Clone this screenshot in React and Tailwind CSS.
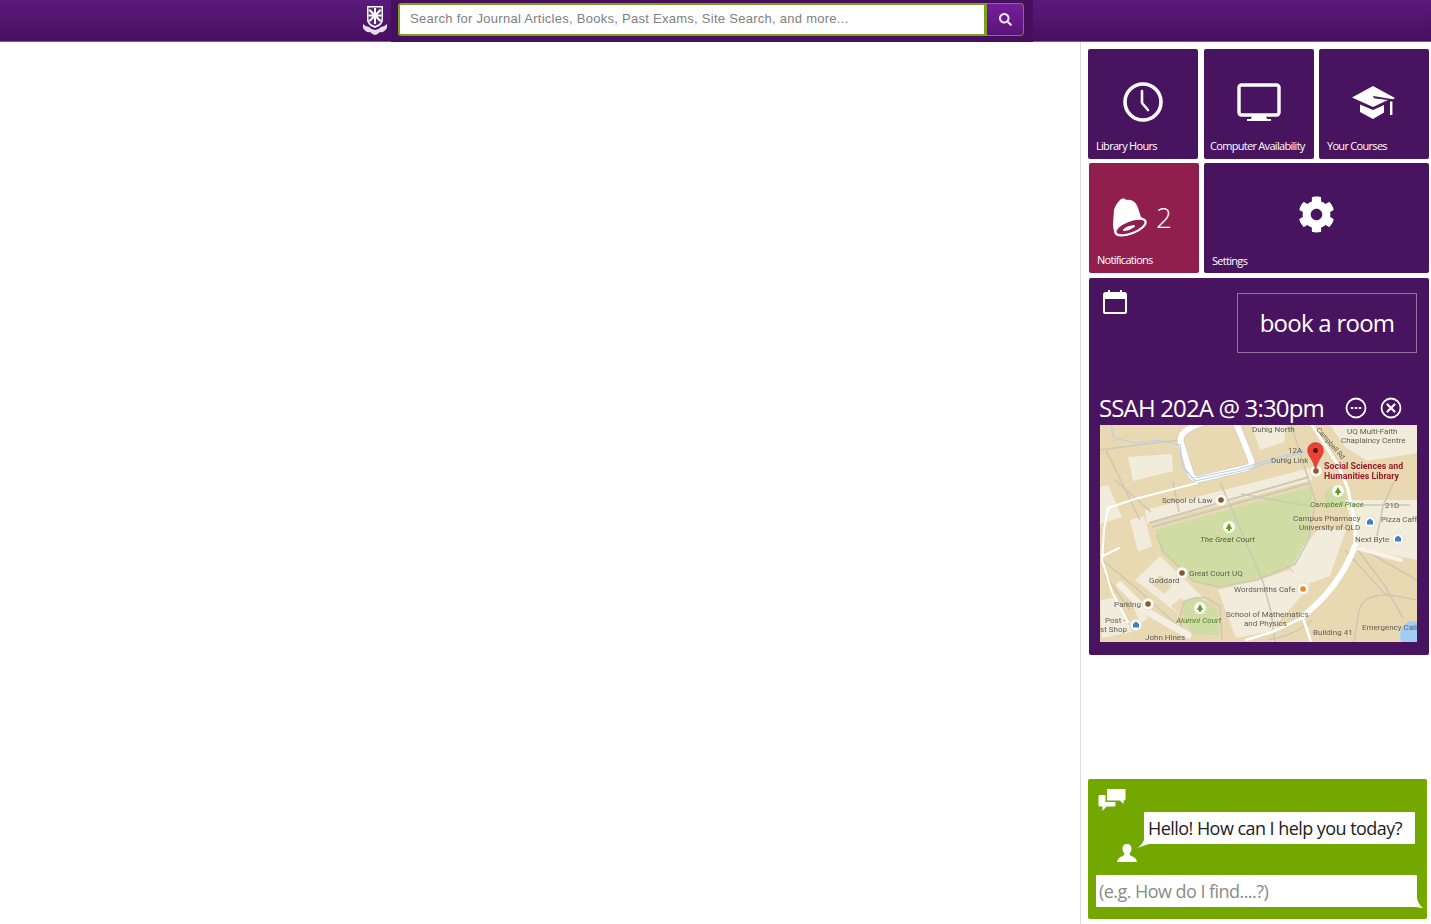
import { FaCog, FaSearch } from "react-icons/fa";

const uiFont = "font-['Open_Sans','Noto_Sans',sans-serif]";

function Tile({ width = "w-[110px]", bg = "bg-[#49145f]", icon, label, labelClass = "pl-2 pb-[6px]" }) {
  return (
    <div className={`${width} ${bg} h-[110px] rounded-[2px] flex flex-col text-white`}>
      <div className="flex-1 flex items-center justify-center">{icon}</div>
      <div className={`${labelClass} text-[11px] leading-[15px] tracking-[-0.7px] whitespace-nowrap`}>{label}</div>
    </div>
  );
}

function ClockIcon() {
  return (
    <svg width="42" height="42" viewBox="0 0 42 42" fill="none" stroke="white" className="mt-[17px]">
      <circle cx="21" cy="21" r="18" strokeWidth="3.6" />
      <path d="M20 10v12l6 7" strokeWidth="2.6" strokeLinecap="round" strokeLinejoin="round" />
    </svg>
  );
}

function MonitorIcon() {
  return (
    <svg width="44" height="40" viewBox="0 0 44 40" fill="none" className="mt-[19px]">
      <rect x="2" y="2" width="40" height="30" rx="2.5" stroke="white" strokeWidth="3.4" />
      <path d="M15 33h14l1 3h4v2H10v-2h4z" fill="white" />
    </svg>
  );
}

function CapIcon() {
  return (
    <svg width="44" height="36" viewBox="0 0 44 36" fill="white" className="mt-[19px]">
      <path d="M21 1 0 12.500 21 22l15-7-14-1.800-1-2.200 20 3.200L43 13z" />
      <path d="M8 19.500 21 25l11-5v7.500L21 34 8 27z" />
      <path d="M38 16.500h2.400V30H38z" />
    </svg>
  );
}

function BellIcon() {
  return (
    <svg width="36" height="40" viewBox="0 0 36 40" fill="none">
      <path d="M8 3c2-2 5-2 6 0 6-1 10 2 12 8l3 9c2 2 4 3 5 5L3 37C2 34 1 31 1 27l1-14c1-4 3-7 6-10z" fill="white" />
      <ellipse cx="18.500" cy="30" rx="16" ry="6.500" transform="rotate(-21 18.500 30)" fill="#911f4d" stroke="white" strokeWidth="2.200" />
      <ellipse cx="17" cy="31" rx="6.500" ry="1.800" transform="rotate(-21 17 31)" fill="white" />
    </svg>
  );
}

function CalendarIcon() {
  return (
    <svg width="26" height="26" viewBox="0 0 26 26" fill="white">
      <path d="M3 3h3V1h2v2h10V1h2v2h3a3 3 0 0 1 2 3v17a2 2 0 0 1-2 2H3a2 2 0 0 1-2-2V6a3 3 0 0 1 2-3zm0 7v13h20V10z" fillRule="evenodd" />
    </svg>
  );
}

function MoreIcon() {
  return (
    <svg width="22" height="22" viewBox="0 0 22 22" fill="none" stroke="white">
      <circle cx="11" cy="11" r="9.500" strokeWidth="1.800" />
      <path d="M6.500 11h1M10.500 11h1M14.500 11h1" strokeWidth="2" strokeLinecap="round" />
    </svg>
  );
}

function CloseIcon() {
  return (
    <svg width="22" height="22" viewBox="0 0 22 22" fill="none" stroke="white">
      <circle cx="11" cy="11" r="9.500" strokeWidth="1.800" />
      <path d="m7.500 7.500 7 7m0-7-7 7" strokeWidth="2.200" strokeLinecap="round" />
    </svg>
  );
}

function ChatIcon() {
  return (
    <svg width="28" height="24" viewBox="0 0 28 24" fill="white">
      <path d="M9 1a1.500 1.500 0 0 1 1.500-1.500H26A1.500 1.500 0 0 1 27.500 1v9a1.500 1.500 0 0 1-1.500 1.500h-.5v3.500L22 11.500H9z" />
      <path d="M7.500 6H2A1.500 1.500 0 0 0 .500 7.500V16A1.500 1.500 0 0 0 2 17.500h2.500V22l4-4.500H16a1.500 1.500 0 0 0 1.500-1.500v-3H7.500z" />
    </svg>
  );
}

function UserIcon() {
  return (
    <svg width="20" height="18" viewBox="0 0 20 18" fill="white">
      <path d="M10 0c3 0 4.500 2 4.500 4.500 0 2-.8 3.800-2 5 .2 1.500 1 2.200 3 3 2 .8 3.800 2 4.500 5.500H0c.7-3.500 2.500-4.700 4.500-5.500 2-.8 2.800-1.500 3-3-1.200-1.200-2-3-2-5C5.500 2 7 0 10 0z" />
    </svg>
  );
}

function Poi({ x, y, color = "#8a5a2b", square = false }) {
  return (
    <g>
      <circle cx={x} cy={y} r="6" fill="#fbfaf4" stroke="#d8d2c0" strokeWidth="0.6" />
      {square ? (
        <path d={`M${x - 3} ${y + 2.500}v-3.500l3-2.500 3 2.500v3.500z`} fill={color} />
      ) : (
        <circle cx={x} cy={y} r="2.800" fill={color} />
      )}
    </g>
  );
}

function Tree({ x, y }) {
  return (
    <g>
      <circle cx={x} cy={y} r="6" fill="#fbfaf4" />
      <path d={`M${x} ${y - 4}l3.200 6h-2.200v2h-2v-2h-2.200z`} fill="#5f9e24" />
    </g>
  );
}

function CampusMap() {
  const label = "font-['Roboto','Liberation_Sans',sans-serif]";
  return (
    <svg viewBox="1100 425 317 217" width="317" height="217" className={`block blur-[0.35px] ${label}`}>
      <rect x="1100" y="425" width="317" height="217" fill="#e8d9b2" />

      {/* pale building blocks */}
      <g fill="#f1ecdc">
        <path d="M1252 425h34l-2 17-24 8z" />
        <path d="M1128 457l44-3 1 17-40 10z" />
        <path d="M1100 487l8-2 14 32-22 7z" />
        <path d="M1130 520l14-4 8 30-14 6z" />
        <path d="M1330 425h87v28l-50 8-22-14z" />
        <path d="M1345 500h72v60l-60-12-4-20z" />
        <path d="M1318 530h28l-16 46-28 10-14-24z" />
        <path d="M1135 580l25-24 48 46-22 18z" />
        <path d="M1218 590l40-10 30 20-12 30-40 8z" />
        <path d="M1100 600l16-3 16 35-30 6z" />
        <path d="M1258 580l32-10 20 16-26 30-18-10z" />
        <path d="M1145 510l165-42 2 12-165 44z" />
        <path d="M1138 597l10 22-8 4-8-20z" />
      </g>
      <path d="M1152 584l8-9 12 11-8 8zM1171 606l10-8 12 12-10 8z" fill="#e8d9b2" />

      {/* green areas */}
      <path d="M1155 530l158-44-4 50-16 28-38 16-37 6-27-6-30-28z" fill="#cfdca3" />
      <path d="M1184 601q12-6 20-1 12 5 14 14l1 22-28-2-8-18z" fill="#cfdca3" />
      <path d="M1326 490q10-8 18-2l2 18-18 2-4-10z" fill="#cfdca3" />

      {/* grey paths */}
      <g fill="none" stroke="#cfc8b4" strokeWidth="1.600">
        <path d="M1100 450l60-8 22-2M1106 450l34 70M1115 480l36 32" />
        <path d="M1152 527l158-44M1149 523l160-46" strokeWidth="2" />
        <path d="M1173 482l6 30M1220 482l13 30 30 70 8 30 4 30" />
        <path d="M1157 535l6 16 30 30 26 6 38-7 38-16 14-25 6-36M1291 425l18 56 8 24" />
        <path d="M1241 494l68 12" />
        <path d="M1184 640l-4-22 4-16q10-6 22-4l14 8 2 34" />
        <path d="M1355 546l30 40 18 32M1345 550l40 44 32 6M1357 546l60 34M1400 597q-40-8-42 20l-4 25" />
        <path d="M1100 558l36 30 40 36M1105 575l25 35" />
        <path d="M1268 640q30-6 44-20M1395 480l-12 26-6 30M1350 505h60" />
      </g>

      {/* white roads */}
      <g fill="none" stroke="#fff" strokeLinecap="round" strokeLinejoin="round">
        <path d="M1235 420l16 40q2 6-5 8l-46 11q-6 1-9-4l-10-32q-2-8 6-13l7-4 8-3" strokeWidth="7.500" stroke="#d4d0c4" />
        <path d="M1235 420l16 40q2 6-5 8l-46 11q-6 1-9-4l-10-32q-2-8 6-13l7-4 8-3" strokeWidth="6" />
        <path d="M1312 425l26 40 10 24 7 34v20" strokeWidth="3" />
        <path d="M1355 546q-16 42-52 70" strokeWidth="6" />
        <path d="M1197 483l-62 16-27 9-4 22-2 30 10 32 16 30M1103 556l16-8" strokeWidth="2" />
        <path d="M1357 548l44 12" strokeWidth="4" stroke="#f7f4ea" />
        <path d="M1120 585l26 26 42 24" strokeWidth="7" stroke="#f4efe2" />
        <path d="M1302 618l-30 14-26 8M1303 618l8 24" strokeWidth="2.500" />
      </g>

      {/* blue links */}
      <g fill="none" stroke="#b9cfe8" strokeWidth="1.200">
        <path d="M1111 425l3 13 22 5 20-3 24 5 3 22 12 14" />
        <path d="M1195 478l44-9 20-6 46-13" />
        <path d="M1195 481l46-10 20-6 44-13" />
      </g>
      <path d="M1417 622v20h-16q-3-12 4-18 6-5 12-2z" fill="#a3ccf4" />

      {/* places */}
      <Poi x={1221} y={500} />
      <Tree x={1229} y={527} />
      <Tree x={1338} y={491} />
      <Tree x={1200} y={608} />
      <Poi x={1182} y={573} />
      <Poi x={1148} y={604} />
      <Poi x={1303} y={589} color="#ef8a1e" />
      <Poi x={1370} y={522} color="#3f7fd0" square />
      <Poi x={1398} y={539} color="#3f7fd0" square />
      <Poi x={1136} y={625} color="#3f7fd0" square />
      <Poi x={1316} y={471} />

      <g fontSize="8" fill="#5f5f55">
        <text x="1252" y="431.500">Duhig North</text>
        <text x="1288" y="453">12A</text>
        <text x="1271" y="463">Duhig Link</text>
        <text x="1347" y="434">UQ Multi-Faith</text>
        <text x="1341" y="443">Chaplaincy Centre</text>
        <text x="1316" y="430" fontSize="7" transform="rotate(49 1316 430)">Campbell Rd</text>
        <text x="1162" y="503">School of Law</text>
        <text x="1385" y="508">21D</text>
        <text x="1293" y="521">Campus Pharmacy</text>
        <text x="1299" y="530">University of QLD</text>
        <text x="1381" y="522">Pizza Caff</text>
        <text x="1355" y="542">Next Byte</text>
        <text x="1189" y="576">Great Court UQ</text>
        <text x="1149" y="583">Goddard</text>
        <text x="1234" y="592">Wordsmiths Cafe</text>
        <text x="1114" y="607">Parking</text>
        <text x="1226" y="617">School of Mathematics</text>
        <text x="1244" y="626">and Physics</text>
        <text x="1105" y="623">Post -</text>
        <text x="1100" y="632">st Shop</text>
        <text x="1145" y="640">John Hines</text>
        <text x="1313" y="635">Building 41</text>
        <text x="1362" y="630">Emergency Call</text>
      </g>
      <g fontSize="8" fontStyle="italic">
        <text x="1200" y="542" fill="#4f5f3a">The Great Court</text>
        <text x="1176" y="623" fill="#4e7a2e">Alumni Court</text>
        <text x="1310" y="507" fill="#4e7a2e">Campbell Place</text>
      </g>
      <g fontSize="8.800" fontWeight="700" fill="#9b1c2e">
        <text x="1324" y="469">Social Sciences and</text>
        <text x="1324" y="479">Humanities Library</text>
      </g>

      {/* pin */}
      <path d="M1315.500 470q-2-8-5-12-3-4-3-7.500a8 8 0 0 1 16 0q0 3.500-3 7.500-3 4-5 12z" fill="#ea4335" stroke="#b8322a" strokeWidth="0.500" />
      <circle cx="1315.500" cy="450.500" r="2.500" fill="#5a1510" />
    </svg>
  );
}

export default function App() {
  return (
    <div className="h-[924px] overflow-hidden bg-white">
      <header className="h-[42px] flex items-start pl-[363px] bg-gradient-to-b from-[#5a1a7c] to-[#470f60] border-b border-[#7b5a8e]">
        <svg width="24" height="29" viewBox="0 0 24 29" className="mt-[6px] shrink-0">
          <path d="M4 0h16v14q0 5-8 8-8-3-8-8z" fill="white" />
          <path d="M5.500 1.500h13v12q0 4-6.500 6.500-6.500-2.500-6.500-6.500z" fill="#5a2a7c" />
          <path d="M11 2h2v5l4-4 1.500 1.500-4 4h4v2h-4l4 4L17 16l-4-4v6h-2v-6l-4 4-1.500-1.500 4-4h-4v-2h4l-4-4L7 3l4 4z" fill="white" />
          <path d="M0 18q3 3 6 3 3 3 6 3 3 0 6-3 3 0 6-3v4q-3 5-7 4-3 3-5 3t-5-3q-4 1-7-4z" fill="#e6dcec" />
        </svg>
        <div className="ml-[4px] w-[642px] h-[42px] bg-[#47105f] pl-[7px] pt-[3px] flex items-start">
          <div className="w-[589px] h-[33px] bg-white border-2 border-[#7ba21e] border-r-[3px] rounded-l-[3px] flex items-center pl-[10px] pb-[2px]">
            <span className="font-['Liberation_Sans',sans-serif] text-[13px] tracking-[0.27px] text-[#808080] whitespace-nowrap">
              Search for Journal Articles, Books, Past Exams, Site Search, and more...
            </span>
          </div>
          <div className="w-[37px] h-[33px] bg-gradient-to-b from-[#74209a] to-[#5c1478] border border-l-0 border-[#6f8a28] rounded-r-[4px] flex items-center justify-center">
            <FaSearch className="text-[#f0e6f5] text-[13px]" />
          </div>
        </div>
      </header>

      <div className="flex">
        <main className="flex-1" />
        <aside className={`w-[351px] h-[882px] shrink-0 border-l border-[#dcdcdc] pt-[7px] pl-[7px] ${uiFont}`}>
          <div className="flex">
            <Tile icon={<ClockIcon />} label="Library Hours" />
            <div className="ml-[6px]">
              <Tile icon={<MonitorIcon />} label="Computer Availability" labelClass="pl-[6px] pb-[6px]" />
            </div>
            <div className="ml-[5px]">
              <Tile icon={<CapIcon />} label="Your Courses" />
            </div>
          </div>

          <div className="flex mt-[4px] ml-[1px]">
            <Tile
              bg="bg-[#911f4d]"
              icon={
                <div className="flex items-center gap-[8px] mt-[18px] mr-[4px]">
                  <BellIcon />
                  <span className="text-[28px] leading-none font-light">2</span>
                </div>
              }
              label="Notifications"
            />
            <div className="ml-[5px]">
              <Tile width="w-[225px]" icon={<FaCog className="text-[37px] mt-[12px]" />} label="Settings" labelClass="pl-[8px] pb-[5px]" />
            </div>
          </div>

          <section className="ml-[1px] mt-[5px] w-[340px] h-[377px] bg-[#49145f] rounded-[2px] text-white pt-[11px] pl-[11px]">
            <div className="flex items-start h-[101px]">
              <div className="pl-[2px]"><CalendarIcon /></div>
              <div className="ml-[109px] mt-[4px] w-[180px] h-[60px] border border-white/40 flex items-center justify-center text-[24px] tracking-[-0.75px]">
                book a room
              </div>
            </div>
            <div className="flex items-center h-[35px]">
              <span className="-ml-[1px] w-[246px] text-[24px] leading-none tracking-[-0.85px] whitespace-nowrap">SSAH 202A @ 3:30pm</span>
              <MoreIcon />
              <div className="ml-[13px]"><CloseIcon /></div>
            </div>
            <CampusMap />
          </section>

          <section className="relative mt-[124px] w-[339px] h-[140px] bg-[#72a800] rounded-[2px] pt-[10px]">
            <div className="pl-[10px] h-[23px]"><ChatIcon /></div>
            <div className="relative ml-[56px] w-[271px] h-[32px] bg-white rounded-[1px] flex items-center pl-[4px] text-[18px] tracking-[-0.55px] text-[#222] whitespace-nowrap">
              Hello! How can I help you today?
              <svg width="12" height="8" viewBox="0 0 12 8" fill="white" className="absolute left-[-7px] bottom-[-4px]">
                <path d="M7 0h5v4L0 8q5-3 7-8z" />
              </svg>
            </div>
            <div className="ml-[29px] h-[31px]"><UserIcon /></div>
            <div className="relative ml-[8px] w-[321px] h-[32px] bg-white rounded-[1px] flex items-center pl-[3px] pt-[1px] text-[18px] tracking-[-0.55px] text-[#8a8a8a]">
              (e.g. How do I find....?)
              <svg width="8" height="10" viewBox="0 0 8 10" fill="white" className="absolute right-[-6px] bottom-[-1px]">
                <path d="M0 0h2q1 6 6 10L0 9z" />
              </svg>
            </div>
          </section>
        </aside>
      </div>
    </div>
  );
}
